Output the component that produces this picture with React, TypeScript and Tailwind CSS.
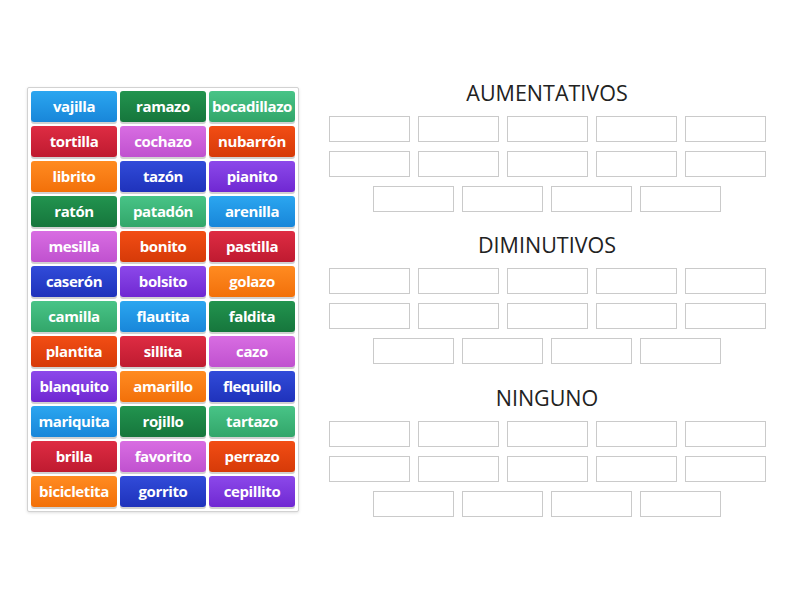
import React from "react";

const tones: Record<string, string> = {
  blue: "from-[#2ba6f0] to-[#1886d9]",
  dkgreen: "from-[#22944f] to-[#16763c]",
  ltgreen: "from-[#48c487] to-[#32a66a]",
  red: "from-[#de2c43] to-[#bf1a30]",
  pink: "from-[#d86de2] to-[#c051cf]",
  orangered: "from-[#f24d14] to-[#d63a08]",
  orange: "from-[#ff8b20] to-[#f27008]",
  indigo: "from-[#314bd9] to-[#1f32bb]",
  purple: "from-[#8c48ea] to-[#7027d2]",
};

const words: [string, string][] = [
  ["vajilla", "blue"],
  ["ramazo", "dkgreen"],
  ["bocadillazo", "ltgreen"],
  ["tortilla", "red"],
  ["cochazo", "pink"],
  ["nubarrón", "orangered"],
  ["librito", "orange"],
  ["tazón", "indigo"],
  ["pianito", "purple"],
  ["ratón", "dkgreen"],
  ["patadón", "ltgreen"],
  ["arenilla", "blue"],
  ["mesilla", "pink"],
  ["bonito", "orangered"],
  ["pastilla", "red"],
  ["caserón", "indigo"],
  ["bolsito", "purple"],
  ["golazo", "orange"],
  ["camilla", "ltgreen"],
  ["flautita", "blue"],
  ["faldita", "dkgreen"],
  ["plantita", "orangered"],
  ["sillita", "red"],
  ["cazo", "pink"],
  ["blanquito", "purple"],
  ["amarillo", "orange"],
  ["flequillo", "indigo"],
  ["mariquita", "blue"],
  ["rojillo", "dkgreen"],
  ["tartazo", "ltgreen"],
  ["brilla", "red"],
  ["favorito", "pink"],
  ["perrazo", "orangered"],
  ["bicicletita", "orange"],
  ["gorrito", "indigo"],
  ["cepillito", "purple"],
];

const groups = ["AUMENTATIVOS", "DIMINUTIVOS", "NINGUNO"];

const Slot = () => (
  <div className="h-[26px] w-[81px] border border-[#cacaca] bg-white" />
);

const Group = ({ title }: { title: string }) => (
  <div className="flex flex-col items-center">
    <h2 className="mb-[9px] text-[21.5px] leading-[28px] text-[#222]">{title}</h2>
    <div className="flex flex-col items-center gap-[9px]">
      <div className="flex gap-[8px]">
        {[0, 1, 2, 3, 4].map((i) => (
          <Slot key={i} />
        ))}
      </div>
      <div className="flex gap-[8px]">
        {[0, 1, 2, 3, 4].map((i) => (
          <Slot key={i} />
        ))}
      </div>
      <div className="flex gap-[8px]">
        {[0, 1, 2, 3].map((i) => (
          <Slot key={i} />
        ))}
      </div>
    </div>
  </div>
);

export default function App() {
  return (
    <div
      className="flex h-[600px] w-[800px] items-start gap-[28px] bg-white pt-[79px] pl-[27px]"
      style={{ fontFamily: '"Open Sans", "Noto Sans", sans-serif' }}
    >
      <div className="mt-[8px] rounded-[2px] border border-[#d2d2d2] bg-white px-[3px] pt-[3px] pb-[4px] shadow-[0_1px_3px_rgba(0,0,0,0.12)]">
        <div className="grid grid-cols-[repeat(3,86px)] gap-x-[3px] gap-y-[4px]">
          {words.map(([w, c]) => (
            <div
              key={w}
              className={`flex h-[31px] items-center justify-center rounded-[3px] bg-linear-to-b text-[15px] font-bold tracking-[-0.4px] text-white shadow-[0_2px_0_rgba(0,0,0,0.18)] ${tones[c]}`}
            >
              {w}
            </div>
          ))}
        </div>
      </div>

      <div className="flex w-[440px] flex-col gap-[19px]">
        {groups.map((g, i) => (
          <div key={g} className={i === 2 ? "mt-[1px]" : ""}>
            <Group title={g} />
          </div>
        ))}
      </div>
    </div>
  );
}
